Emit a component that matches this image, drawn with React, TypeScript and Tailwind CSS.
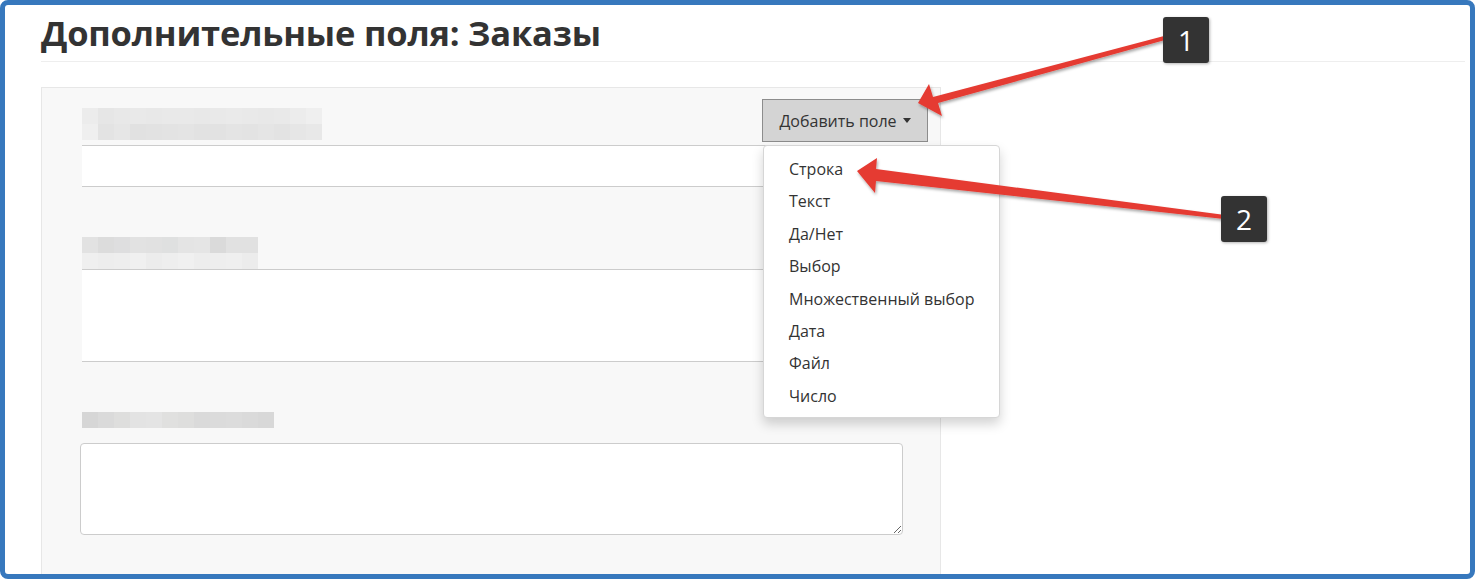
import React from 'react';

const menuItems = ['Строка', 'Текст', 'Да/Нет', 'Выбор', 'Множественный выбор', 'Дата', 'Файл', 'Число'];

// pixelated "blurred" label, cells of 16px
const BlurLabel: React.FC<{ rows: string[][] }> = ({ rows }) => (
  <div className="flex flex-col">
    {rows.map((row, i) => (
      <div key={i} className="flex">
        {row.map((c, j) => (
          <div key={j} className="w-4 h-4" style={{ background: c }} />
        ))}
      </div>
    ))}
  </div>
);

const label1 = [
  ['#ececec', '#e6e6e6', '#e8e8e8', '#e9e9e9', '#e8e8e8', '#e9e9e9', '#e9e9e9', '#e8e8e8', '#e9e9e9', '#eaeaea', '#e9e9e9', '#e8e8e8', '#e9e9e9', '#ececec', '#efefef'],
  ['#efefef', '#e3e3e3', '#e6e6e6', '#e1e1e1', '#e2e2e2', '#e3e3e3', '#e4e4e4', '#e2e2e2', '#e2e2e2', '#e4e4e4', '#e3e3e3', '#e5e5e5', '#e3e3e3', '#e6e6e6', '#e8e8e8'],
];
const label2 = [
  ['#e2e2e2', '#dcdcdc', '#dededf', '#e2e2e2', '#e1e1e1', '#dfe0e0', '#e4e4e4', '#e5e5e5', '#dadada', '#e1e1e1', '#e1e1e1'],
  ['#efefef', '#ededed', '#eeeeee', '#f0f0f0', '#ececec', '#eeeeee', '#f0f0f0', '#ededed', '#eeeeee', '#efefef', '#ececec'],
];
const label3 = [
  ['#d6d6d6', '#dadada', '#dededd', '#e3e3e3', '#e4e4e4', '#e0e0df', '#dededd', '#dadada', '#dbdbdb', '#dcdcdc', '#dadada', '#d8d8d8'],
];

const Badge: React.FC<{ n: string; className: string }> = ({ n, className }) => (
  <div className={`absolute w-[46px] h-[46px] bg-[#333] rounded-[3px] shadow-[1px_1px_3px_rgba(0,0,0,0.3)] flex items-center justify-center text-white text-[28px] ${className}`}>
    {n}
  </div>
);

export default function App() {
  return (
    <div className="relative w-[1475px] h-[579px] bg-white border-[5px] border-[#3778bd] rounded-[8px] overflow-hidden font-['Open_Sans',sans-serif] text-[#333]">
      <div className="pl-[36px] pr-[5px]">
        <h1 className="pt-[8px] pb-[8px] border-b border-[#eeeeee] text-[34.5px] leading-[40px] font-bold tracking-[-0.2px]">
          Дополнительные поля: Заказы
        </h1>

        <div className="relative mt-[25px] w-[900px] h-[500px] bg-[#f8f8f8] border border-[#e7e7e7] pl-[40px] pr-[37px]">
          <div className="flex justify-between items-start pt-[11px]">
            <div className="pt-[9px]">
              <BlurLabel rows={label1} />
            </div>
            <div className="-mr-[25px] w-[166px] h-[43px] bg-[#d4d4d4] border border-[#8c8c8c] flex items-center justify-center gap-[6px] text-[16px]">
              <span>Добавить поле</span>
              <span className="w-0 h-0 border-l-[4px] border-r-[4px] border-t-[5px] border-l-transparent border-r-transparent border-t-[#333]" />
            </div>
          </div>
          <div className="mt-[3px] h-[42px] bg-white border-y border-[#cccccc]" />

          <div className="mt-[50px]">
            <BlurLabel rows={label2} />
          </div>
          <div className="h-[93px] bg-white border-y border-[#cccccc]" />

          <div className="mt-[50px]">
            <BlurLabel rows={label3} />
          </div>
          <textarea className="mt-[15px] -ml-[2px] block w-[823px] h-[92px] bg-white border border-[#cccccc] rounded-[4px] resize" />

          <div className="absolute left-[721px] top-[57px] w-[237px] h-[273px] bg-white border border-[#d6d6d6] rounded-[4px] shadow-[0_6px_12px_rgba(0,0,0,0.175)] pt-[8px] pl-[25px] text-[16px]">
            {menuItems.map((m) => (
              <div key={m} className="h-[32.4px] leading-[31px] text-[#333]">{m}</div>
            ))}
          </div>
        </div>
      </div>

      <svg className="absolute left-[-5px] top-[-5px] pointer-events-none" width="1475" height="579">
        <defs>
          <filter id="sh" x="-20%" y="-20%" width="140%" height="140%">
            <feDropShadow dx="1" dy="2" stdDeviation="1.5" floodColor="#000" floodOpacity="0.35" />
          </filter>
        </defs>
        <g fill="#e53a32" filter="url(#sh)">
          <polygon points="1164,36 1165,40 938,103 942,116 918,103 929,84 933,97" />
          <polygon points="1225,215 1224,219 876,181 875,193 857,171 877,158 876,169" />
        </g>
      </svg>

      <Badge n="1" className="left-[1158px] top-[12px]" />
      <Badge n="2" className="left-[1216px] top-[191px]" />
    </div>
  );
}
